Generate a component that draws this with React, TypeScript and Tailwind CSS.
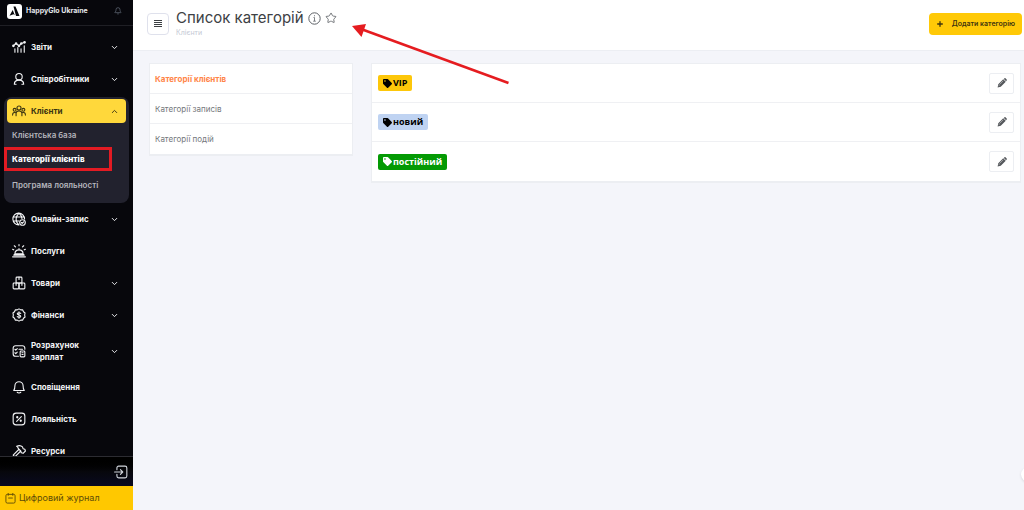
import { ReactNode, useState } from "react";
import clsx from "clsx";
import { Bell, ChevronDown, ChevronUp, Plus, Star } from "lucide-react";
import { FaTag } from "react-icons/fa";

const Icon = ({ children }: { children: ReactNode }) => (
    <svg
        viewBox="0 0 24 24"
        fill="none"
        stroke="currentColor"
        strokeWidth="1.9"
        strokeLinecap="round"
        strokeLinejoin="round"
        className="size-[14px] shrink-0"
        aria-hidden="true"
    >
        {children}
    </svg>
);

const icons = {
    reports: (
        <Icon>
            <path d="M2 10l5-4 5 4 4-4 6-2M5 15v6M10 13v8M15.500 15v6M21 10v11" />
            <circle cx="2.5" cy="10" r="1.3" />
            <circle cx="7" cy="6" r="1.3" />
            <circle cx="12" cy="10" r="1.3" />
            <circle cx="16" cy="6" r="1.3" />
            <circle cx="21.5" cy="4" r="1.3" />
        </Icon>
    ),
    staff: (
        <Icon>
            <circle cx="12" cy="8" r="5.5" />
            <path d="M4 21c0-5 3-7 8-7s8 2 8 7h-3M4 21h3" />
        </Icon>
    ),
    clients: (
        <Icon>
            <circle cx="12" cy="7" r="3.5" />
            <circle cx="4.5" cy="10" r="2.5" />
            <circle cx="19.5" cy="10" r="2.5" />
            <path d="M7 20v-4c0-3 2-4 5-4s5 1 5 4v4M7 15c-4-1-6 0-6 4M17 15c4-1 6 0 6 4" />
        </Icon>
    ),
    online: (
        <Icon>
            <path d="M21.5 12A10 10 0 1 0 12 22M2.5 8.500h19M2.500 15.500H12M12 2C8 6 7 9 7 12s1 7 5 10M12 2c4 4 5 7 5 9" />
            <circle cx="18" cy="18" r="4.8" />
            <path d="M16 18l1.500 1.500L20 17" />
        </Icon>
    ),
    services: (
        <Icon>
            <path d="M1 22h22M3 19h18l-2-2H5l-2 2M5 17c0-5 3-7 7-7s7 2 7 7M12 10V8M12 1v2M4 3l2 2M20 3l-2 2M1 9l2 1M23 9l-2 1" />
        </Icon>
    ),
    goods: (
        <Icon>
            <rect x="7" y="2" width="10" height="10" rx="1.5" />
            <rect x="2" y="12" width="10" height="10" rx="1.5" />
            <rect x="12" y="12" width="10" height="10" rx="1.5" />
            <path d="M12 2v4M7 12v4M17 12v4" />
        </Icon>
    ),
    finance: (
        <Icon>
            <path d="M12 1.5l3 1.7 3.4.1 1.3 3.1 2.7 2.1-.7 3.5.7 3.5-2.7 2.1-1.3 3.1-3.4.1-3 1.7-3-1.7-3.4-.1-1.3-3.1-2.7-2.1.7-3.5-.7-3.5 2.7-2.1 1.3-3.1L9 3.200z" />
            <path d="M15 9.500c-1-2-6-2-6 .5s6 1.500 6 4-5 2.500-6 .5M12 6.500v11" />
        </Icon>
    ),
    payroll: (
        <Icon>
            <path d="M22 9V7a4 4 0 0 0-4-4H6a4 4 0 0 0-4 4v10a4 4 0 0 0 4 4h5M5 9l1.500 1.500L9 8M12 9h6M5 15l1.500 1.500L9 14" />
            <rect x="14" y="12" width="8" height="10" rx="1.5" />
            <path d="M17 15h2M17 18h2" />
        </Icon>
    ),
    alerts: (
        <Icon>
            <path d="M3 18c2-2 2-4 2-8a7 7 0 0 1 14 0c0 4 0 6 2 8H3M9 21c1.500 1.500 4.500 1.500 6 0" />
        </Icon>
    ),
    loyalty: (
        <Icon>
            <rect x="2" y="2" width="20" height="20" rx="5" />
            <path d="M8 16l8-8" />
            <circle cx="9" cy="9" r="1" />
            <circle cx="15" cy="15" r="1" />
        </Icon>
    ),
    resources: (
        <Icon>
            <path d="M12 9L2 19l3 3L15 12M8 4c4-2 7-2 10 1l1 3 3 1 1 3-4 4-3-1-1-3-4-4c-1-2-1-3-3-4z" />
        </Icon>
    ),
};

type MenuItem = { label: string; icon: ReactNode; expandable?: boolean };

const topMenu: MenuItem[] = [
    { label: "Звіти", icon: icons.reports, expandable: true },
    { label: "Співробітники", icon: icons.staff, expandable: true },
];

const bottomMenu: MenuItem[] = [
    { label: "Онлайн-запис", icon: icons.online, expandable: true },
    { label: "Послуги", icon: icons.services },
    { label: "Товари", icon: icons.goods, expandable: true },
    { label: "Фінанси", icon: icons.finance, expandable: true },
    { label: "Розрахунок зарплат", icon: icons.payroll, expandable: true },
    { label: "Сповіщення", icon: icons.alerts },
    { label: "Лояльність", icon: icons.loyalty },
    { label: "Ресурси", icon: icons.resources },
];

const tabs = ["Категорії клієнтів", "Категорії записів", "Категорії подій"];

const categories = [
    { name: "VIP", style: "bg-[#fdc70a] text-black" },
    { name: "новий", style: "bg-[#bfd3f2] text-black" },
    { name: "постійний", style: "bg-[#049a04] text-white" },
];

function MenuButton({ item }: { item: MenuItem }) {
    return (
        <button
            className={clsx(
                "flex w-full shrink-0 items-center gap-[5px] pr-[14px] pl-3 text-left text-[8px] leading-3 font-bold text-gray-100",
                item.label.includes(" ") ? "h-10" : "h-8",
            )}
        >
            {item.icon}
            <span className="flex-1">{item.label}</span>
            {item.expandable && <ChevronDown className="size-[9px]" strokeWidth={2.5} />}
        </button>
    );
}

function Sidebar() {
    const [open, setOpen] = useState(true);

    return (
        <aside className="flex w-[133px] shrink-0 flex-col bg-[#07070c]">
            <div className="flex h-[26px] shrink-0 items-center border-b border-[#1f1f25] px-[7px] pb-[3px]">
                <svg viewBox="0 0 15 15" className="size-[15px] shrink-0" aria-hidden="true">
                    <rect width="15" height="15" rx="3" fill="#fff" />
                    <path d="M6.500 2.500h2L12.500 12H9z" fill="#08080c" />
                    <path d="M5.700 6L7.800 11.200 6.500 10.200 2.500 11.800z" fill="#08080c" />
                </svg>
                <span className="ml-1 flex-1 text-[7px] font-bold whitespace-nowrap text-gray-200">
                    HappyGlo Ukraine
                </span>
                <button aria-label="Сповіщення" className="mr-1 text-gray-500">
                    <Bell className="size-2" />
                </button>
            </div>

            <nav className="flex min-h-0 flex-1 flex-col overflow-hidden pt-[5px]">
                {topMenu.map((item) => (
                    <MenuButton key={item.label} item={item} />
                ))}
                <div className="mx-1 mt-[2px] shrink-0 rounded-lg bg-[#22222e] pb-1">
                    <div className="px-[3px] pt-[2px]">
                        <button
                            onClick={() => setOpen(!open)}
                            className="flex h-6 w-full items-center gap-[5px] rounded-[4px] bg-[#ffd83b] pr-[7px] pl-[5px] text-left text-[8px] font-bold text-[#3c3512]"
                        >
                            {icons.clients}
                            <span className="flex-1">Клієнти</span>
                            <ChevronUp className="size-[9px]" strokeWidth={2.5} />
                        </button>
                    </div>
                    {open && (
                        <div className="flex flex-col text-[8px] font-semibold text-[#b5b5bd]">
                            <a href="#base" className="flex h-6 items-center pl-2">
                                Клієнтська база
                            </a>
                            <a
                                href="#categories"
                                className="mr-[17px] flex h-6 items-center border-3 border-[#e31b23] pl-[5px] font-extrabold whitespace-nowrap text-white"
                            >
                                Категорії клієнтів
                            </a>
                            <a href="#loyalty" className="flex h-7 items-center pl-2">
                                Програма лояльності
                            </a>
                        </div>
                    )}
                </div>
                {bottomMenu.map((item) => (
                    <MenuButton key={item.label} item={item} />
                ))}
            </nav>

            <div className="flex h-[30px] shrink-0 items-center justify-end border-t border-[#2c2c32] bg-linear-to-b from-black via-[#07070c] to-[#090920] pr-[5px] text-gray-300">
                <button aria-label="Вийти">
                    <Icon>
                        <path d="M5 8V5a3 3 0 0 1 3-3h11a3 3 0 0 1 3 3v14a3 3 0 0 1-3 3H8a3 3 0 0 1-3-3v-3M1 12h14M11 8l4 4-4 4" />
                    </Icon>
                </button>
            </div>
            <a
                href="#journal"
                className="flex h-6 shrink-0 items-center gap-[3px] bg-[#ffc800] pl-[5px] text-[9px] text-[#5e4c08]"
            >
                <svg
                    viewBox="0 0 12 12"
                    fill="none"
                    stroke="currentColor"
                    className="size-[11px]"
                    aria-hidden="true"
                >
                    <rect x="1" y="1.500" width="10" height="9.500" rx="1.500" />
                    <path d="M3.500 0v3M8.500 0v3M3.500 5.500h5" />
                </svg>
                Цифровий журнал
            </a>
        </aside>
    );
}

export default function App() {
    const [tab, setTab] = useState(tabs[0]);

    return (
        <div className="relative flex h-screen overflow-hidden bg-[#f4f5fa] font-['Inter',sans-serif]">
            <Sidebar />
            <div className="flex min-w-0 flex-1 flex-col">
                <header className="flex h-[51px] shrink-0 items-start border-b border-[#eceef3] bg-white pr-[2px] pl-[14px]">
                    <button
                        aria-label="Меню"
                        className="mt-[13px] flex size-[22px] items-center justify-center rounded-[4px] border border-[#dfe1ec]"
                    >
                        <svg viewBox="0 0 8 8" stroke="#3c4043" className="size-2" aria-hidden="true">
                            <path d="M0 .5h8M0 2.500h8M0 4.500h8M0 6.500h8" />
                        </svg>
                    </button>
                    <div className="ml-[7px] flex-1 pt-2">
                        <div className="flex items-center">
                            <h1 className="text-[15px] leading-5 text-[#3d4144]">Список категорій</h1>
                            <button aria-label="Інформація" className="ml-1 text-[#5d6166]">
                                <svg
                                    viewBox="0 0 13 13"
                                    fill="none"
                                    stroke="currentColor"
                                    className="size-[13px]"
                                    aria-hidden="true"
                                >
                                    <circle cx="6.500" cy="6.500" r="5.700" />
                                    <path
                                        d="M5.500 5.500h1v3.500M5.200 9.200h2.600M6.500 3.200v1.100"
                                        strokeWidth=".8"
                                    />
                                </svg>
                            </button>
                            <button aria-label="Обране" className="ml-1 text-[#5d6166]">
                                <Star className="size-3" strokeWidth={1.7} />
                            </button>
                        </div>
                        <p className="text-[7px] leading-[10px] text-[#c4c8d4]">Клієнти</p>
                    </div>
                    <button className="mt-[13px] flex h-[22px] items-center gap-2 rounded-[4px] bg-[#ffc907] px-[7px] text-[7px] font-semibold text-[#3f3510]">
                        <Plus className="size-2" strokeWidth={4} />
                        Додати категорію
                    </button>
                </header>

                <main className="flex items-start gap-[18px] py-3 pr-[3px] pl-4">
                    <div className="flex w-[204px] shrink-0 flex-col divide-y divide-[#eff0f3] border border-b-2 border-[#eceef2] bg-white">
                        {tabs.map((name) => (
                            <button
                                key={name}
                                onClick={() => setTab(name)}
                                className={clsx(
                                    "h-[30px] px-[5px] text-left text-[8px]",
                                    name === tab
                                        ? "font-bold text-[#ff8548]"
                                        : "text-[#74777b]",
                                )}
                            >
                                {name}
                            </button>
                        ))}
                    </div>
                    <ul className="min-w-0 flex-1 divide-y divide-[#eff0f3] border border-b-2 border-[#eceef2] bg-white">
                        {categories.map((category) => (
                            <li
                                key={category.name}
                                className="flex h-[39px] items-center justify-between px-[6px]"
                            >
                                <span
                                    className={clsx(
                                        "flex h-4 items-center gap-px rounded-[2px] px-[5px] font-['Open_Sans',sans-serif] text-[9px] font-bold",
                                        category.style,
                                    )}
                                >
                                    <FaTag className="size-[9px]" />
                                    {category.name}
                                </span>
                                <button
                                    aria-label={`Редагувати ${category.name}`}
                                    className="flex h-[21px] w-[25px] items-center justify-center rounded-[2px] border border-[#eceef2] text-[#55585c]"
                                >
                                    <svg viewBox="0 0 16 16" className="size-[10px]" aria-hidden="true">
                                        <path
                                            d="M1 15l1-5 8-8 4 4-8 8zM11 1.500l1-1c.5-.5 1-.5 1.500 0l2 2c.5.500.5 1 0 1.500l-1 1z"
                                            fill="currentColor"
                                        />
                                        <path d="M4 10.500l6-6M3 13l.5-1.500" stroke="#fff" strokeWidth=".7" />
                                    </svg>
                                </button>
                            </li>
                        ))}
                    </ul>
                </main>
            </div>

            {/* pointer to the page title */}
            <svg
                viewBox="0 0 160 62"
                className="pointer-events-none absolute top-[24px] left-[351px] h-[62px] w-[160px]"
                aria-hidden="true"
            >
                <path d="M10 5L157.500 59" stroke="#e51c20" strokeWidth="2.500" />
                <path d="M1 2L15 0 10.500 13z" fill="#e51c20" />
            </svg>
            <div className="absolute -right-3 bottom-[28px] size-[15px] rounded-full bg-white shadow-sm" />
        </div>
    );
}
